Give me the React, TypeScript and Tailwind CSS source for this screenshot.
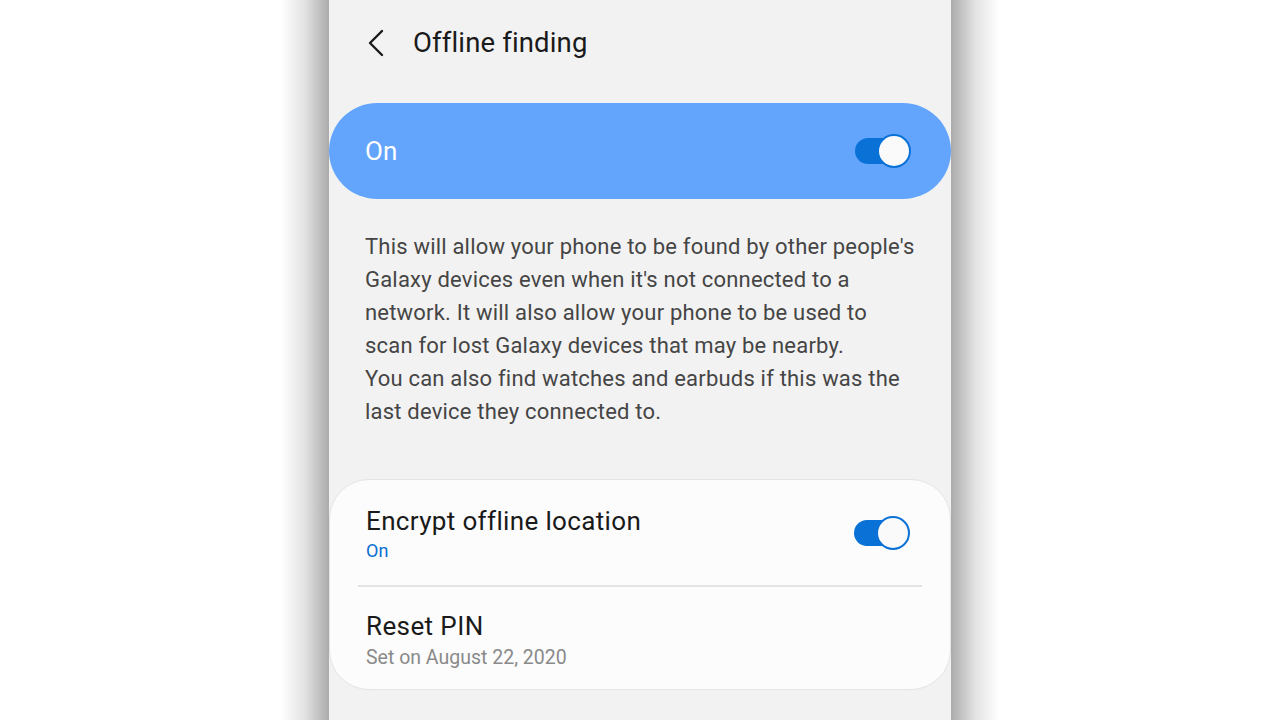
function Toggle() {
  return (
    <div className="relative h-[34px] w-[56px]">
      <div className="absolute left-0 top-[4px] h-[26px] w-[50px] rounded-full bg-[#0a72d6]" />
      <div className="absolute right-0 top-0 h-[34px] w-[34px] rounded-full border-2 border-[#0a72d6] bg-[#fafafa]" />
    </div>
  );
}

export default function App() {
  return (
    <div
      className="flex h-[720px] w-[1280px] overflow-hidden bg-white"
      style={{ fontFamily: "Roboto, 'Noto Sans', sans-serif" }}
    >
      <div className="flex-1" />
      <div className="w-[48px] bg-gradient-to-r from-white via-[#e2e2e2] to-[#ababab]" />
      <div className="flex w-[622px] flex-col bg-[#f2f2f2]">
        <header className="flex h-[86px] items-center pl-[38px]">
          <svg width="18" height="28" viewBox="0 0 18 28" fill="none" className="text-[#1a1a1a]">
            <polyline
              points="15,2 3,14 15,26"
              stroke="currentColor"
              strokeWidth="2.4"
              strokeLinecap="round"
              strokeLinejoin="round"
            />
          </svg>
          <h1 className="ml-[28px] text-[27.5px] tracking-[0.15px] text-[#1a1a1a]">Offline finding</h1>
        </header>

        <div className="mt-[17px] flex h-[96px] items-center justify-between rounded-[48px] bg-[#63a5fd] pl-[36px] pr-[40px]">
          <span className="text-[26px] text-white">On</span>
          <Toggle />
        </div>

        <p className="whitespace-nowrap pl-[36px] pr-[10px] pt-[31px] text-[22px] leading-[33px] tracking-[0.2px] text-[#454545]">
          This will allow your phone to be found by other people's
          <br />
          Galaxy devices even when it's not connected to a
          <br />
          network. It will also allow your phone to be used to
          <br />
          scan for lost Galaxy devices that may be nearby.
          <br />
          You can also find watches and earbuds if this was the
          <br />
          last device they connected to.
        </p>

        <section className="mt-[51px] rounded-[40px] border border-[#e4e4e4] bg-[#fcfcfc]">
          <div className="flex h-[105px] items-center justify-between pl-[36px] pr-[40px]">
            <div className="flex flex-col pt-[5px]">
              <span className="text-[26px] leading-[32px] tracking-[0.35px] text-[#1a1a1a]">
                Encrypt offline location
              </span>
              <span className="text-[18px] leading-[28px] text-[#0a6fd0]">On</span>
            </div>
            <Toggle />
          </div>
          <div className="mx-[28px] h-[2px] bg-[#e4e4e4]" />
          <div className="flex h-[102px] flex-col justify-center pl-[36px] pt-[7px]">
            <span className="text-[26px] leading-[32px] tracking-[0.4px] text-[#1a1a1a]">Reset PIN</span>
            <span className="text-[19.5px] leading-[32px] text-[#8a8a8a]">Set on August 22, 2020</span>
          </div>
        </section>
      </div>
      <div className="w-[48px] bg-gradient-to-l from-white via-[#e2e2e2] to-[#ababab]" />
      <div className="flex-1" />
    </div>
  );
}
